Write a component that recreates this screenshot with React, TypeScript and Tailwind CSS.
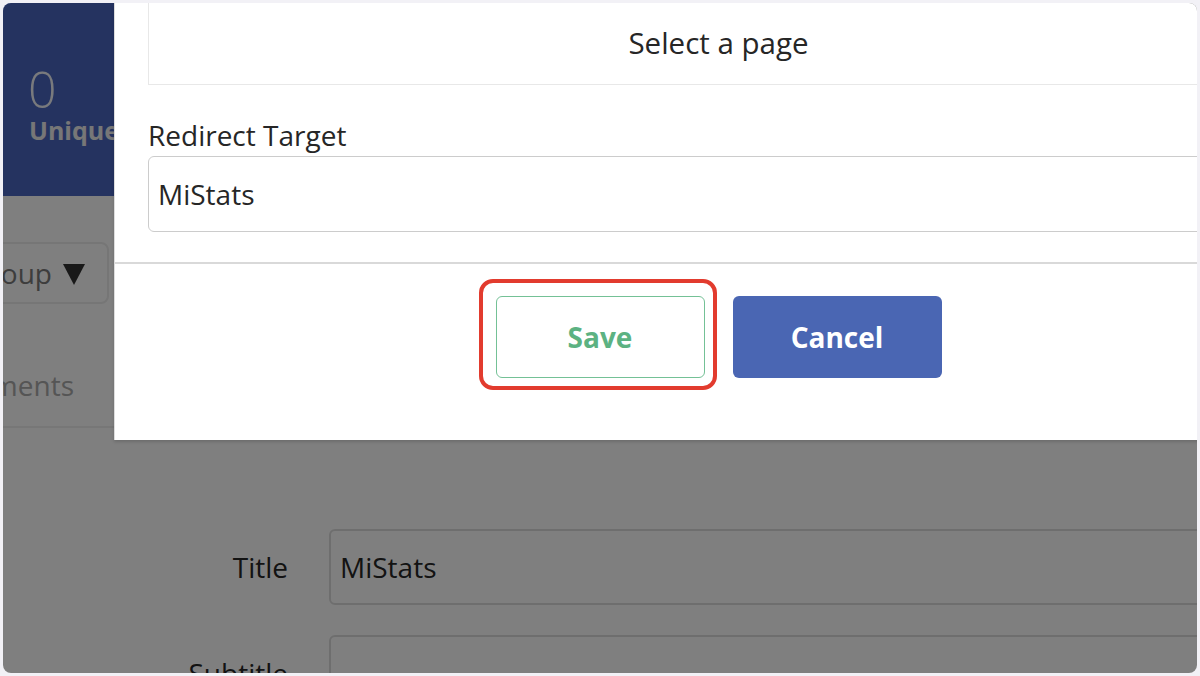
export default function App() {
  return (
    <div
      className="w-[1200px] h-[676px] bg-[#f2f1f6] pt-[3px] pl-[3px] pr-[3px] pb-[3px]"
      style={{ fontFamily: '"Open Sans", "Noto Sans", sans-serif' }}
    >
      <div className="relative h-full w-full overflow-hidden rounded-[8px] bg-white">
        {/* page under the modal */}
        <div className="flex h-[425px] border-b-2 border-[#eeeeee]">
          <div className="flex w-[111px] shrink-0 flex-col items-end overflow-hidden">
            <div className="h-[193px] w-full shrink-0 bg-[#4a67c0] pl-[25px] pt-[59px] text-white">
              <div className="text-[50px] font-light leading-[54px] text-[#f2f4fa]">0</div>
              <div className="whitespace-nowrap pl-[1px] text-[25px] font-bold leading-[28px] text-[#eeeeee]">
                Unique visitors
              </div>
            </div>
            <button className="mt-[46px] mr-[5px] flex h-[62px] shrink-0 items-center whitespace-nowrap rounded-[8px] border-2 border-[#ececec] pl-[14px] pr-[22px] text-[28px] text-[#7a7a7a]">
              Group
              <svg width="22" height="22" viewBox="0 0 22 22" className="ml-[11px] mt-[2px]">
                <polygon points="0,1 22,1 11,22" fill="#333333" />
              </svg>
            </button>
            <div className="mt-[62px] mr-[40px] whitespace-nowrap text-[28px] leading-[38px] text-[#aaaaaa]">
              Segments
            </div>
          </div>
          <div className="flex-1" />
        </div>

        <div className="mt-[101px] flex flex-col gap-[30px]">
          <div className="flex items-center">
            <div className="w-[285px] shrink-0 text-right text-[28px] text-[#262626]">Title</div>
            <div className="ml-[41px] mr-[-20px] flex h-[76px] flex-1 items-center rounded-[6px] border-2 border-[#dddddd] pl-[9px] text-[28px] text-[#262626]">
              MiStats
            </div>
          </div>
          <div className="flex items-center">
            <div className="w-[285px] shrink-0 text-right text-[28px] text-[#262626]">Subtitle</div>
            <div className="ml-[41px] mr-[-20px] h-[76px] flex-1 rounded-[6px] border-2 border-[#dddddd]" />
          </div>
        </div>

        {/* dim overlay */}
        <div className="absolute inset-0 bg-black/50" />

        {/* modal */}
        <div className="absolute left-[111px] top-0 h-[437px] w-[1208px] border-l border-[#dddddd] bg-white shadow-[0_2px_3px_rgba(0,0,0,0.15)]">
          <div className="px-[33px]">
            <div className="flex h-[82px] items-center justify-center border-x border-b border-[#e8e8e8] text-[29.5px] text-[#262626]">
              Select a page
            </div>
            <div className="mt-[31px] text-[28px] leading-[38px] text-[#262626]">Redirect Target</div>
            <div className="mt-[2px] flex h-[76px] items-center rounded-[6px] border border-[#cccccc] pl-[9px] text-[28px] text-[#262626]">
              MiStats
            </div>
          </div>
          <div className="mt-[30px] border-t-2 border-[#d9d9d9]" />
          <div className="flex justify-center gap-[28px] pt-[32px]">
            <div className="relative">
              <button className="flex h-[82px] w-[209px] items-center justify-center rounded-[6px] border-[1.5px] border-[#74c196] bg-white text-[28px] font-bold text-[#5cb282]">
                Save
              </button>
              <div className="pointer-events-none absolute left-[-17px] top-[-17px] right-[-12px] bottom-[-12px] rounded-[14px] border-[4px] border-[#e23b2e]" />
            </div>
            <button className="flex h-[82px] w-[209px] items-center justify-center rounded-[6px] bg-[#4a66b3] text-[28px] font-bold text-white">
              Cancel
            </button>
          </div>
        </div>
      </div>
    </div>
  )
}
